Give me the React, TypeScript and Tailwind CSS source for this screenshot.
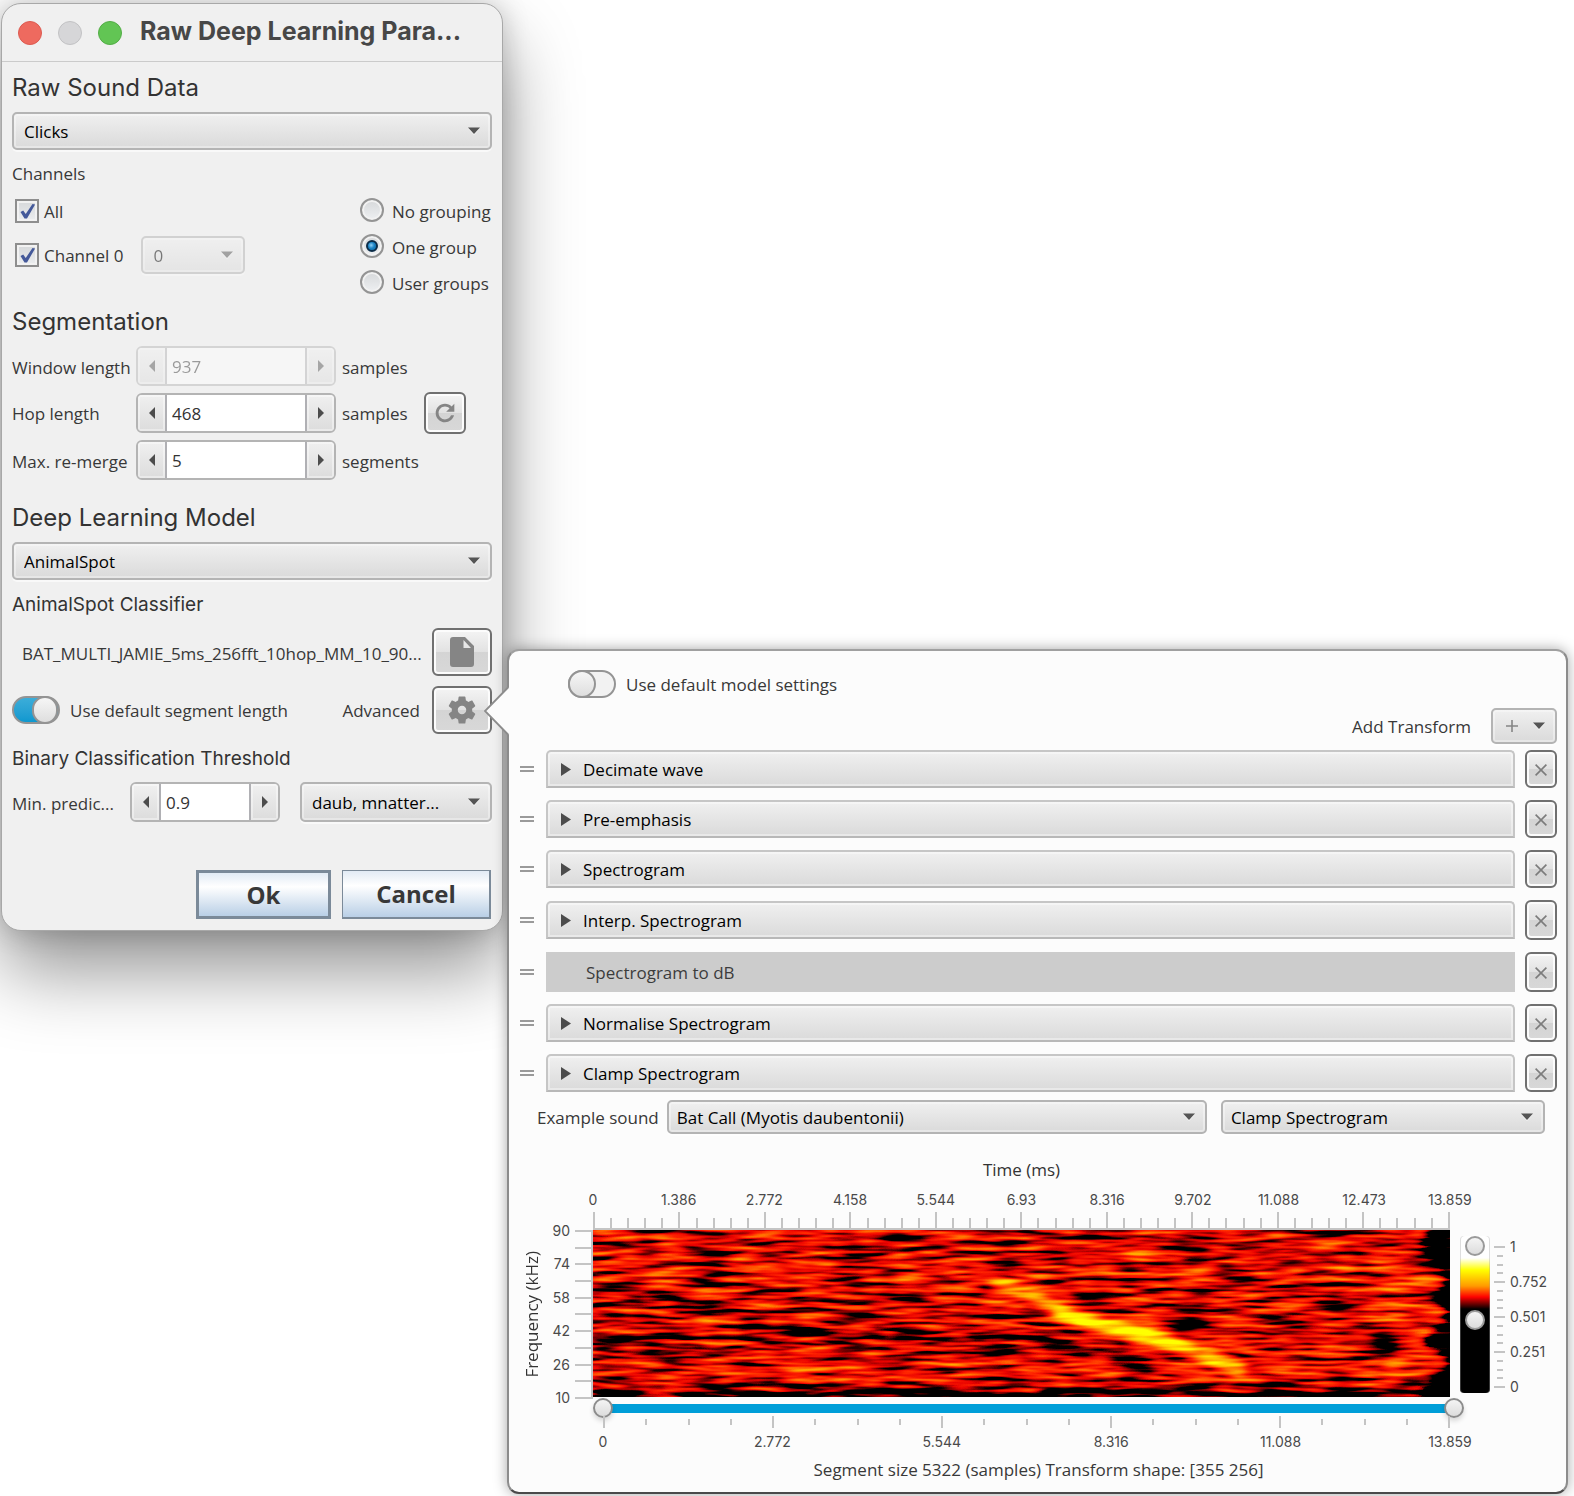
import React, { useId, useState } from "react";

/* ---------- shared looks ---------- */

const FIELD =
  "rounded-[5px] border-2 border-[#b4b4b4] bg-linear-to-b from-[#f0f0f0] to-[#dadada] shadow-[inset_0_0_0_2px_rgba(255,255,255,0.35),0_2px_0_rgba(255,255,255,0.6)]";

const DARK_BUTTON =
  "flex items-center justify-center rounded-[6px] border-2 border-[#707070] bg-[linear-gradient(#f4f4f4,#e2e2e2_50%,#d4d4d4_50%,#d8d8d8)] shadow-[inset_0_0_0_2px_#fcfcfc]";

function Caret({ className = "" }: { className?: string }) {
  return (
    <svg viewBox="0 0 12 8" className={`h-2 w-3 ${className}`} aria-hidden="true">
      <path d="M0 1.5 6 8l6-6.5z" fill="#fff" opacity="0.7" />
      <path d="M0 .5h12L6 7z" fill="#555" />
    </svg>
  );
}

function Dropdown({
  label,
  options,
  className = "",
  tight = false,
  disabled = false,
}: {
  label: string;
  options: string[];
  className?: string;
  tight?: boolean;
  disabled?: boolean;
}) {
  return (
    <div className={`grid ${disabled ? "opacity-50" : ""} ${className}`}>
      <select
        aria-label={label}
        disabled={disabled}
        className={`col-start-1 row-start-1 w-full appearance-none truncate pt-0.5 text-black ${FIELD} ${tight ? "pl-2" : "pl-2.5"} pr-8`}
      >
        {options.map((o) => (
          <option key={o}>{o}</option>
        ))}
      </select>
      <Caret className="pointer-events-none col-start-1 row-start-1 mr-3 self-center justify-self-end" />
    </div>
  );
}

function Arrow({ left = false }: { left?: boolean }) {
  return (
    <svg viewBox="0 0 6 12" className="h-3 w-1.5" aria-hidden="true">
      <path d={left ? "M6 0v12L0 6z" : "M0 0v12l6-6z"} fill="#4c4c4c" />
    </svg>
  );
}

function Spinner({
  label,
  value,
  disabled = false,
  className = "",
}: {
  label: string;
  value: string;
  disabled?: boolean;
  className?: string;
}) {
  const [text, setText] = useState(value);
  const side =
    "flex w-[27px] shrink-0 items-center justify-center bg-linear-to-b from-[#f0f0f0] to-[#dcdcdc] shadow-[inset_0_0_0_2px_rgba(255,255,255,0.4)]";
  return (
    <div
      className={`flex h-10 overflow-hidden rounded-[6px] border-2 border-[#b4b4b4] ${disabled ? "opacity-45" : ""} ${className}`}
    >
      <button type="button" disabled={disabled} aria-label={`Decrease ${label}`} className={side}>
        <Arrow left />
      </button>
      <input
        aria-label={label}
        disabled={disabled}
        value={text}
        onChange={(e) => setText(e.target.value)}
        className="min-w-0 flex-1 border-x-2 border-[#b0b0b4] bg-white pt-0.5 pl-[5px] text-[#333]"
      />
      <button type="button" disabled={disabled} aria-label={`Increase ${label}`} className={side}>
        <Arrow />
      </button>
    </div>
  );
}

function Check({ label }: { label: string }) {
  return (
    <label className="flex items-center gap-[5px]">
      <span className="grid pl-[3px]">
        <input
          type="checkbox"
          defaultChecked
          className="peer col-start-1 row-start-1 size-6 appearance-none border-2 border-[#8e8e8e] bg-linear-to-b from-[#d6d8da] to-[#eceef0] shadow-[inset_0_0_0_2px_#f2f2f2]"
        />
        <svg
          viewBox="0 0 24 24"
          className="pointer-events-none invisible col-start-1 row-start-1 size-6 peer-checked:visible"
          aria-hidden="true"
        >
          <path d="M5.500 13 8.200 11.500l2.500 3.500L17.500 5l2.600.4L12 19.500H9.500z" fill="#44599a" />
        </svg>
      </span>
      <span className="pt-0.5">{label}</span>
    </label>
  );
}

function Radio({ label, checked = false }: { label: string; checked?: boolean }) {
  return (
    <label className="flex h-6 items-center gap-2">
      <span className="grid place-items-center">
        <input
          type="radio"
          name="grouping"
          defaultChecked={checked}
          className="peer col-start-1 row-start-1 size-6 appearance-none rounded-full border-2 border-[#949494] bg-linear-to-b from-[#d6d8da] to-[#eef0f2] shadow-[inset_0_0_0_2px_#f2f2f2]"
        />
        <span className="pointer-events-none invisible col-start-1 row-start-1 size-3 rounded-full border-2 border-[#0b2c48] bg-[radial-gradient(circle_at_40%_40%,#8fd0f5,#1b83c4_45%,#0d6aa8)] peer-checked:visible" />
      </span>
      <span className="pt-1">{label}</span>
    </label>
  );
}

function Toggle({ label, on = false }: { label: string; on?: boolean }) {
  return (
    <label className="flex items-center gap-2.5">
      <input
        type="checkbox"
        role="switch"
        defaultChecked={on}
        className="flex h-7 w-12 shrink-0 appearance-none rounded-full border-2 border-[#949494] bg-[#f2f2f2] checked:bg-linear-to-b checked:from-[#3badd9] checked:to-[#0d98cf] before:-my-0.5 before:-ml-0.5 before:size-7 before:rounded-full before:border-2 before:border-[#949494] before:bg-linear-to-b before:from-[#f6f6f6] before:to-[#dedede] checked:before:ml-[18px]"
      />
      <span className="pt-0.5">{label}</span>
    </label>
  );
}

/* ---------- settings dialog ---------- */

const H2 = "font-[Inter,sans-serif] text-2xl leading-8 font-normal text-[#333]";
const H3 = "mt-2.5 pt-0.5 font-[Inter,sans-serif] text-[19px] leading-[26px] font-normal text-[#333]";

function ParametersDialog() {
  return (
    <section
      aria-label="Raw Deep Learning Parameters"
      className="mt-[3px] ml-px w-[502px] shrink-0 rounded-[20px] border border-[#a8a8a8] bg-[#f0f0f0] shadow-[0_40px_76px_rgba(0,0,0,0.42),0_0_28px_rgba(0,0,0,0.2)]"
    >
      <header className="flex h-[58px] items-center border-b border-[#cbcbcb] px-4">
        <div className="flex gap-4">
          <button type="button" aria-label="Close" className="size-6 rounded-full border border-[#dd5a50] bg-[#ee6a5f]" />
          <button type="button" aria-label="Minimise" className="size-6 rounded-full border border-[#c2c2c4] bg-[#d6d6d8]" />
          <button type="button" aria-label="Zoom" className="size-6 rounded-full border border-[#53ad46] bg-[#62c554]" />
        </div>
        <h1 className="ml-[18px] truncate pb-1 font-[Inter,sans-serif] text-[25px] leading-10 font-bold text-[#474747]">
          Raw Deep Learning Para...
        </h1>
      </header>

      <form className="flex flex-col px-2.5 pt-2.5 pb-[11px]" onSubmit={(e) => e.preventDefault()}>
        <h2 className={H2}>Raw Sound Data</h2>
        <Dropdown label="Raw sound data" options={["Clicks"]} className="mt-2 h-[38px]" />

        <p className="mt-3 leading-6">Channels</p>
        <div className="mt-3 flex justify-between">
          <div className="flex flex-col gap-3">
            <div className="flex h-[26px]">
              <Check label="All" />
            </div>
            <div className="flex gap-[18px]">
              <Check label="Channel 0" />
              <Dropdown label="Group of channel 0" options={["0"]} disabled className="h-[38px] w-[104px]" />
            </div>
          </div>
          <fieldset className="flex w-[132px] flex-col gap-3 whitespace-nowrap">
            <Radio label="No grouping" />
            <Radio label="One group" checked />
            <Radio label="User groups" />
          </fieldset>
        </div>

        <h2 className={`${H2} mt-3`}>Segmentation</h2>
        <div className="mt-2 grid grid-cols-[124px_200px_88px_auto] items-center justify-start gap-y-1.5">
          <span className="pt-1">Window length</span>
          <Spinner label="Window length" value="937" disabled />
          <span className="col-span-2 pt-1 pl-1.5">samples</span>

          <span className="pt-0.5">Hop length</span>
          <Spinner label="Hop length" value="468" />
          <span className="pt-0.5 pl-1.5">samples</span>
          <button type="button" aria-label="Reset hop length" className={`size-[42px] ${DARK_BUTTON}`}>
            <svg viewBox="0 0 24 24" className="size-7" fill="#858585" aria-hidden="true">
              <path d="M17.650 6.350C16.200 4.900 14.210 4 12 4c-4.420 0-7.990 3.580-7.990 8s3.570 8 7.990 8c3.730 0 6.840-2.550 7.730-6h-2.580c-.820 2.100-2.840 3.500-5.150 3.500-3.040 0-5.500-2.460-5.500-5.500s2.460-5.500 5.500-5.500c1.520 0 2.880.620 3.870 1.630L13 11h7V4l-2.350 2.350z" />
            </svg>
          </button>

          <span className="pt-1">Max. re-merge</span>
          <Spinner label="Max. re-merge" value="5" />
          <span className="col-span-2 pt-1 pl-1.5">segments</span>
        </div>

        <h2 className={`${H2} mt-[22px]`}>Deep Learning Model</h2>
        <Dropdown label="Deep learning model" options={["AnimalSpot"]} className="mt-2 h-[38px]" />

        <h3 className={H3}>AnimalSpot Classifier</h3>
        <div className="mt-2.5 flex items-center justify-between pl-2.5">
          <span className="truncate pt-1">BAT_MULTI_JAMIE_5ms_256fft_10hop_MM_10_90...</span>
          <button type="button" aria-label="Choose model file" className={`h-12 w-[60px] shrink-0 ${DARK_BUTTON}`}>
            <svg viewBox="0 0 24 30" className="h-[30px] w-6" fill="#858585" aria-hidden="true">
              <path
                fillRule="evenodd"
                d="M3 0h12L24 9v18a3 3 0 0 1-3 3H3a3 3 0 0 1-3-3V3a3 3 0 0 1 3-3zm10.500 3v8H21z"
              />
            </svg>
          </button>
        </div>
        <div className="mt-2.5 flex items-center">
          <Toggle label="Use default segment length" on />
          <span className="ml-auto pt-0.5 pr-3">Advanced</span>
          <button type="button" aria-label="Advanced settings" className={`h-12 w-[60px] shrink-0 ${DARK_BUTTON}`}>
            <svg viewBox="0 0 24 24" className="size-[34px]" fill="#858585" aria-hidden="true">
              <path d="M19.140 12.940c.040-.300.060-.610.060-.940 0-.320-.020-.640-.070-.940l2.030-1.580c.180-.140.230-.410.120-.610l-1.920-3.320c-.120-.220-.370-.290-.590-.220l-2.390.960c-.500-.380-1.030-.700-1.620-.940l-.360-2.540c-.040-.240-.240-.410-.480-.410h-3.840c-.240 0-.430.170-.470.410l-.360 2.540c-.590.240-1.130.570-1.620.940l-2.390-.960c-.220-.080-.470 0-.590.220L2.740 8.870c-.120.210-.080.470.120.610l2.030 1.580c-.050.300-.090.630-.090.940s.020.640.070.940l-2.030 1.580c-.180.140-.230.410-.120.610l1.920 3.320c.120.220.370.290.590.220l2.390-.960c.500.380 1.030.700 1.620.940l.360 2.540c.050.240.240.410.480.410h3.840c.240 0 .440-.170.470-.410l.360-2.540c.590-.240 1.130-.560 1.620-.940l2.390.960c.220.080.470 0 .590-.220l1.920-3.320c.120-.220.070-.470-.120-.610l-2.010-1.580zM12 15c-1.650 0-3-1.350-3-3s1.350-3 3-3 3 1.350 3 3-1.350 3-3 3z" />
            </svg>
          </button>
        </div>

        <h3 className={H3}>Binary Classification Threshold</h3>
        <div className="mt-2.5 flex items-center">
          <span className="w-[118px] truncate pt-1">Min. predic...</span>
          <Spinner label="Minimum prediction" value="0.9" className="w-[150px]" />
          <Dropdown label="Classes" options={["daub, mnatter..."]} className="ml-5 h-10 min-w-0 flex-1" />
        </div>

        <div className="mt-12 flex justify-end gap-[11px] pr-px font-[Open_Sans,sans-serif] text-2xl font-bold">
          <button
            type="submit"
            className="h-[49px] w-[135px] border-[3px] border-[#7b8a99] bg-[linear-gradient(#e2ebf5,#ffffff_32%,#b9cfe6)] leading-none"
          >
            Ok
          </button>
          <button
            type="button"
            className="h-[49px] w-[149px] border border-r-2 border-b-2 border-[#7b8a99] bg-[linear-gradient(#e2ebf5,#ffffff_32%,#b9cfe6)] leading-none"
          >
            Cancel
          </button>
        </div>
      </form>
    </section>
  );
}

/* ---------- transforms ---------- */

const TRANSFORMS: { name: string; plain?: boolean; tall?: boolean }[] = [
  { name: "Decimate wave" },
  { name: "Pre-emphasis" },
  { name: "Spectrogram" },
  { name: "Interp. Spectrogram", tall: true },
  { name: "Spectrogram to dB", plain: true, tall: true },
  { name: "Normalise Spectrogram" },
  { name: "Clamp Spectrogram" },
];

function TransformRow({ name, plain, tall }: { name: string; plain?: boolean; tall?: boolean }) {
  return (
    <li className="flex items-center gap-2.5">
      <span className="h-1.5 w-3.5 shrink-0 border-y-2 border-[#9a9a9a]" />
      {plain ? (
        <div className="ml-0.5 flex h-10 flex-1 items-center bg-[#cccccc] pt-0.5 pl-10 text-[#3c3c3c]">{name}</div>
      ) : (
        <button
          type="button"
          aria-expanded="false"
          className="ml-0.5 flex h-[38px] flex-1 items-center gap-3 rounded-t-[5px] border-2 border-[#c6c6c6] border-b-[#b8b8b8] bg-linear-to-b from-[#f0f0f0] to-[#dadada] pl-[13px] text-black shadow-[inset_0_0_0_2px_rgba(255,255,255,0.4)]"
        >
          <svg viewBox="0 0 10 13" className="h-[13px] w-2.5" aria-hidden="true">
            <path d="M0 0v13l10-6.500z" fill="#4c4c4c" />
          </svg>
          <span className="pt-0.5">{name}</span>
        </button>
      )}
      <button type="button" aria-label={`Remove ${name}`} className={`w-8 shrink-0 ${tall ? "h-10" : "h-[38px]"} ${DARK_BUTTON}`}>
        <svg viewBox="0 0 12 12" className="mt-0.5 size-3" stroke="#7c7c7c" strokeWidth="1.600" aria-hidden="true">
          <path d="M.6.6l10.800 10.800M11.400.6.6 11.400" />
        </svg>
      </button>
    </li>
  );
}

/* ---------- spectrogram ---------- */

function Spectrogram() {
  const id = useId().replace(/[^a-zA-Z0-9]/g, "");
  const hot = `hot${id}`;
  const soft = `soft${id}`;
  return (
    <svg
      viewBox="0 0 855 167"
      preserveAspectRatio="none"
      role="img"
      aria-label="Spectrogram of the example sound"
      className="block h-[167px] w-full bg-black"
    >
      <defs>
        <filter id={soft} x="-20%" y="-20%" width="140%" height="140%">
          <feGaussianBlur stdDeviation="5 3" />
        </filter>
        <filter
          id={hot}
          filterUnits="userSpaceOnUse"
          x="0"
          y="0"
          width="855"
          height="167"
          colorInterpolationFilters="sRGB"
        >
          <feTurbulence type="fractalNoise" baseFrequency="0.021 0.19" numOctaves="2" seed="11" result="n" />
          <feColorMatrix
            in="n"
            type="matrix"
            values="1.600 0 0 0 -.4  1.600 0 0 0 -.4  1.600 0 0 0 -.4  0 0 0 0 1"
            result="grey"
          />
          <feComposite in="grey" in2="SourceGraphic" operator="arithmetic" k1="-0.4" k2="0.960" k3="1.500" k4="-0.695" result="sum" />
          <feComponentTransfer in="sum">
            <feFuncR type="table" tableValues="0 .5 .92 1 1 1 1 1 1" />
            <feFuncG type="table" tableValues="0 0 .01 .14 .34 .54 .72 .88 1" />
            <feFuncB type="table" tableValues="0 0 0 0 0 0 0 0 0" />
            <feFuncA type="linear" slope="0" intercept="1" />
          </feComponentTransfer>
        </filter>
      </defs>
      <g filter={`url(#${hot})`}>
        <rect width="855" height="167" fill="#686868" />
        <g filter={`url(#${soft})`}>
          {/* louder bands */}
          <path d="M0 142H780" stroke="#777777" strokeWidth="14" />
          <path d="M0 40H810" stroke="#6e6e6e" strokeWidth="26" />
          <path d="M130 40 170 15M40 130l50 15M350 40h60M180 40h50" stroke="#7c7c7c" strokeWidth="12" />
          <ellipse cx="814" cy="50" rx="30" ry="16" fill="#858585" />
          <ellipse cx="818" cy="84" rx="28" ry="14" fill="#858585" />
          <ellipse cx="818" cy="134" rx="30" ry="12" fill="#8a8a8a" />
          {/* quieter patches */}
          <path d="M0 165H855" stroke="#2c2c2c" strokeWidth="12" />
          <path d="M0 72h50M150 102h140M80 78h40M250 24h50M300 110h90M0 114h110M380 160h60" stroke="#484848" strokeWidth="12" />
          <path d="M430 105l130 32" stroke="#4e4e4e" strokeWidth="18" />
          {/* silence after the end of the recording */}
          <path
            d="M870-12H832L830 20Q850 34 848 52 842 64 836 68 852 78 848 92 830 104 830 116 852 124 850 136 842 152 822 162L812 182H870z"
            fill="#000"
          />
        </g>
        {/* bat call */}
        <g fill="none" strokeLinecap="round" filter={`url(#${soft})`}>
          <path d="M385 45 450 70" stroke="#909090" strokeWidth="12" />
          <path d="M402 52q30 8 50 22 30 16 60 22 50 12 80 22 30 8 50 22" stroke="#bababa" strokeWidth="14" />
          <path d="M465 83 Q520 97 600 119L620 126" stroke="#fff" strokeWidth="12" />
          <path d="M606 122l38 17" stroke="#d4d4d4" strokeWidth="17" />
        </g>
      </g>
    </svg>
  );
}

const TIME_LABELS = ["0", "1.386", "2.772", "4.158", "5.544", "6.93", "8.316", "9.702", "11.088", "12.473", "13.859"];
const FREQ_LABELS = ["90", "74", "58", "42", "26", "10"];
const RANGE_LABELS = ["0", "2.772", "5.544", "8.316", "11.088", "13.859"];
const LEVEL_LABELS = ["1", "0.752", "0.501", "0.251", "0"];

const range = (n: number) => Array.from({ length: n }, (_, i) => i);

function LabelRow({ labels }: { labels: string[] }) {
  return (
    <div className="flex justify-between leading-5">
      {labels.map((t) => (
        <span key={t} className="flex w-0 justify-center">
          {t}
        </span>
      ))}
    </div>
  );
}

const THUMB_H =
  "pointer-events-none col-start-1 row-start-1 h-5 w-full appearance-none bg-transparent [&::-webkit-slider-thumb]:pointer-events-auto [&::-webkit-slider-thumb]:size-5 [&::-webkit-slider-thumb]:appearance-none [&::-webkit-slider-thumb]:rounded-full [&::-webkit-slider-thumb]:border-2 [&::-webkit-slider-thumb]:border-[#8c8c8c] [&::-webkit-slider-thumb]:bg-linear-to-b [&::-webkit-slider-thumb]:from-[#f4f4f4] [&::-webkit-slider-thumb]:to-[#dcdcdc] [&::-webkit-slider-thumb]:shadow-[0_3px_5px_rgba(0,0,0,0.15)]";

const THUMB_V =
  "pointer-events-none col-start-1 row-start-1 h-full w-5 appearance-none bg-transparent [direction:rtl] [writing-mode:vertical-lr] [&::-webkit-slider-thumb]:pointer-events-auto [&::-webkit-slider-thumb]:size-5 [&::-webkit-slider-thumb]:appearance-none [&::-webkit-slider-thumb]:rounded-full [&::-webkit-slider-thumb]:border-2 [&::-webkit-slider-thumb]:border-[#9a9a9a] [&::-webkit-slider-thumb]:bg-linear-to-b [&::-webkit-slider-thumb]:from-[#f4f4f4] [&::-webkit-slider-thumb]:to-[#dcdcdc]";

function LevelScale() {
  return (
    <div className="flex items-start pt-1.5 pl-2.5">
      <div className="grid h-[157px] w-[30px] justify-items-center rounded-[4px] bg-[linear-gradient(#fff_12px,#fff_22px,#ffff00_34px,#ff9a00_50px,#ff0000_61px,#000_73px)] shadow-[inset_1px_0_0_rgba(160,160,160,0.35),inset_-1px_0_0_rgba(160,160,160,0.35)]">
        <input type="range" aria-label="Upper level" min="0" max="100" defaultValue="100" className={THUMB_V} />
        <input type="range" aria-label="Lower level" min="0" max="100" defaultValue="46" className={THUMB_V} />
      </div>
      <div className="mt-2.5 ml-1 flex h-[142px] w-[11px] flex-col items-center justify-between">
        {range(17).map((i) => (
          <span key={i} className={`h-0.5 bg-[#c4c4c4] ${i % 4 === 0 ? "w-[11px]" : "w-1.5"}`} />
        ))}
      </div>
      <div className="mt-[11px] ml-[5px] flex h-[140px] flex-col justify-between">
        {LEVEL_LABELS.map((t) => (
          <span key={t} className="flex h-0 items-center">
            {t}
          </span>
        ))}
      </div>
    </div>
  );
}

function Chart() {
  return (
    <div className="mt-6 grid grid-cols-[25px_48px_minmax(0,1fr)_107px] font-[Inter,sans-serif] text-sm font-normal text-[#4a4a4a]">
      <div className="col-start-3 row-start-1">
        <p className="text-center font-[Open_Sans,sans-serif] text-[17px] leading-6 text-[#333]">Time (ms)</p>
        <div className="mt-2">
          <LabelRow labels={TIME_LABELS} />
        </div>
        <div className="mt-0.5 flex h-[18px] items-end justify-between border-b-2 border-[#c4c4c4]">
          {range(51).map((i) => (
            <span key={i} className={`w-0.5 bg-[#c4c4c4] ${i % 5 === 0 ? "h-4" : "h-2.5"}`} />
          ))}
        </div>
      </div>

      <div className="col-start-1 row-start-2 flex items-center justify-center">
        <span className="rotate-180 whitespace-nowrap font-[Open_Sans,sans-serif] text-[17px] text-[#333] [writing-mode:vertical-rl]">
          Frequency (kHz)
        </span>
      </div>
      <div className="col-start-2 row-start-2 flex h-[169px] justify-end gap-[5px]">
        <div className="flex flex-col justify-between text-right">
          {FREQ_LABELS.map((t) => (
            <span key={t} className="flex h-0.5 items-center justify-end">
              {t}
            </span>
          ))}
        </div>
        <div className="flex w-[18px] flex-col justify-between border-r-2 border-[#c4c4c4]">
          {range(11).map((i) => (
            <span key={i} className="h-0.5 bg-[#c4c4c4]" />
          ))}
        </div>
      </div>
      <div className="col-start-3 row-start-2">
        <Spectrogram />
      </div>
      <div className="col-start-4 row-start-2">
        <LevelScale />
      </div>

      <div className="col-start-3 row-start-3 -mt-px">
        <div className="-mr-3.5 grid items-center">
          <div className="col-start-1 row-start-1 mx-2.5 h-[9px] bg-[#009ed8]" />
          <input type="range" aria-label="Range start" defaultValue="0" className={THUMB_H} />
          <input type="range" aria-label="Range end" defaultValue="100" className={THUMB_H} />
        </div>
        <div className="-mt-0.5 ml-2.5 flex h-3 items-center justify-between">
          {range(21).map((i) => (
            <span key={i} className={`w-0.5 bg-[#c4c4c4] ${i % 4 === 0 ? "h-3" : "h-1.5"}`} />
          ))}
        </div>
        <div className="mt-1 ml-2.5">
          <LabelRow labels={RANGE_LABELS} />
        </div>
      </div>
    </div>
  );
}

/* ---------- pop-over ---------- */

function TransformPopover() {
  return (
    <section
      aria-label="Model transforms"
      className="relative mt-[649px] mr-1.5 mb-[3px] ml-1 min-w-0 flex-1 rounded-[12px] border-2 border-[#8c8c8c] border-t-[#a0a0a0] border-b-[#4a4a4a] bg-[#fcfcfc] pt-[19px] pr-[9px] pb-2.5 pl-[11px] shadow-[0_0_14px_rgba(0,0,0,0.35)]"
    >
      <svg viewBox="0 0 26 50" className="absolute top-[35px] -left-[25px] h-[50px] w-[26px]" aria-hidden="true">
        <path d="M26 1 24.500 1 1 25l23.500 24H26z" fill="#fcfcfc" />
        <path d="M24.500 1 1 25l23.500 24" fill="none" stroke="#8c8c8c" strokeWidth="1.800" />
      </svg>

      <div className="flex pl-12">
        <Toggle label="Use default model settings" />
      </div>
      <div className="mt-2.5 flex items-center justify-end gap-5">
        <span className="pt-0.5">Add Transform</span>
        <button type="button" aria-label="Add transform" className={`flex h-9 w-[66px] items-center justify-between pr-2.5 pl-[13px] ${FIELD}`}>
          <svg viewBox="0 0 12 12" className="size-3" stroke="#858585" strokeWidth="1.600" aria-hidden="true">
            <path d="M6 0v12M0 6h12" />
          </svg>
          <Caret />
        </button>
      </div>

      <ul className="mt-1.5 flex flex-col gap-3">
        {TRANSFORMS.map((t) => (
          <TransformRow key={t.name} {...t} />
        ))}
      </ul>

      <div className="mt-2 flex items-center gap-2 pr-3 pl-[17px]">
        <span className="pt-0.5 whitespace-nowrap">Example sound</span>
        <div className="flex min-w-0 flex-1 gap-3.5">
          <Dropdown label="Example sound" options={["Bat Call (Myotis daubentonii)"]} tight className="h-[34px] min-w-0 flex-5" />
          <Dropdown label="Displayed transform" options={["Clamp Spectrogram"]} tight className="h-[34px] min-w-0 flex-3" />
        </div>
      </div>

      <Chart />

      <p className="mt-1.5 text-center leading-6">Segment size 5322 (samples) Transform shape: [355 256]</p>
    </section>
  );
}

export default function App() {
  return (
    <main className="flex min-h-screen items-start overflow-hidden bg-white font-[Open_Sans,sans-serif] text-[17px] leading-6 font-normal text-[#383838]">
      <ParametersDialog />
      <TransformPopover />
    </main>
  );
}
